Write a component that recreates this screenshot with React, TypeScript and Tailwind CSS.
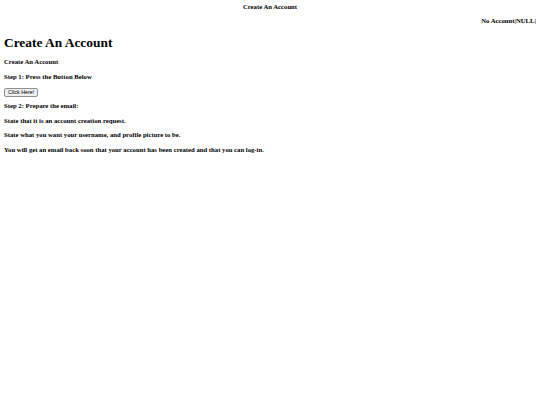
import React from 'react';

const lines = [
  { text: 'State that it is an account creation request.', mt: 'mt-[7px]' },
  { text: 'State what you want your username, and profile picture to be.', mt: 'mt-[6px]' },
  { text: 'You will get an email back soon that your account has been created and that you can log-in.', mt: 'mt-[7px]' },
];

const App: React.FC = () => {
  return (
    <div className="min-h-[405px] w-[540px] bg-white text-black font-['Liberation_Serif',serif] font-bold">
      {/* header */}
      <div className="pt-[3px] text-center text-[6.7px] leading-[8px]">Create An Account</div>
      <div className="mt-[6px] pr-[4px] text-right text-[6.7px] leading-[8px]">No Account|NULL|</div>

      <div className="px-[4px]">
        <h1 className="mt-[10px] text-[13.4px] leading-[15px]">Create An Account</h1>
        <div className="mt-[8px] text-[6.7px] leading-[8px]">Create An Account</div>
        <div className="mt-[7px] text-[6.7px] leading-[8px]">Step 1: Press the Button Below</div>
        <button className="mt-[7px] flex h-[9px] items-center rounded-[2px] border border-[#8f8f8f] bg-[#efefef] px-[3px] font-['Liberation_Sans',sans-serif] text-[5.4px] font-normal leading-none">
          Click Here!
        </button>
        <div className="mt-[5px] text-[6.7px] leading-[8px]">Step 2: Prepare the email:</div>
        {lines.map(({ text, mt }) => (
          <div key={text} className={`${mt} text-[6.7px] leading-[8px]`}>
            {text}
          </div>
        ))}
      </div>
    </div>
  );
};

export default App;
